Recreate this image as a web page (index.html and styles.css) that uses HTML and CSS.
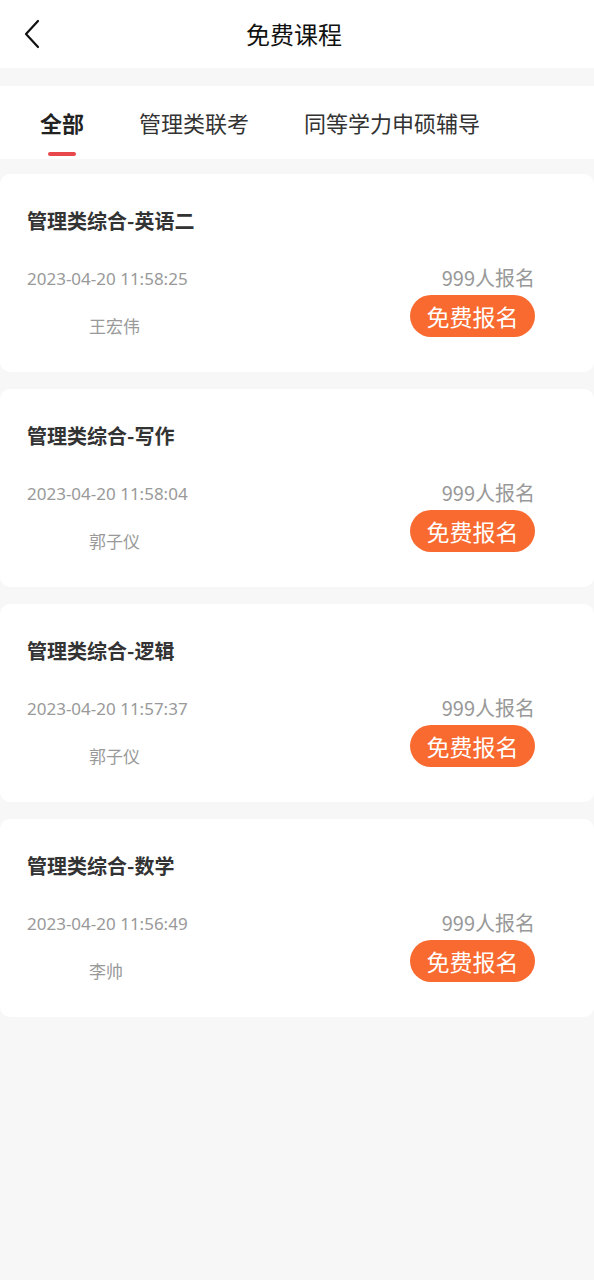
FILE: index.html
```html
<!DOCTYPE html>
<html lang="zh">
<head>
<meta charset="utf-8">
<link rel="stylesheet" href="styles.css">
</head>
<body>
<header class="topbar">
  <svg class="back" width="18" height="30" viewBox="0 0 18 30"><path d="M15 2 L3 15 L15 28" fill="none" stroke="#111" stroke-width="2.2" stroke-linecap="round" stroke-linejoin="round"/></svg>
  <div class="title">免费课程</div>
</header>
<nav class="tabs">
  <div class="tab active">全部<span class="bar"></span></div>
  <div class="tab">管理类联考</div>
  <div class="tab">同等学力申硕辅导</div>
</nav>
<main class="list">
  <div class="card">
    <div class="name">管理类综合-英语二</div>
    <div class="row">
      <div class="meta">
        <div class="date">2023-04-20 11:58:25</div>
        <div class="teacher">王宏伟</div>
      </div>
      <div class="side">
        <div class="count">999人报名</div>
        <div class="btn">免费报名</div>
      </div>
    </div>
  </div>
  <div class="card">
    <div class="name">管理类综合-写作</div>
    <div class="row">
      <div class="meta">
        <div class="date">2023-04-20 11:58:04</div>
        <div class="teacher">郭子仪</div>
      </div>
      <div class="side">
        <div class="count">999人报名</div>
        <div class="btn">免费报名</div>
      </div>
    </div>
  </div>
  <div class="card">
    <div class="name">管理类综合-逻辑</div>
    <div class="row">
      <div class="meta">
        <div class="date">2023-04-20 11:57:37</div>
        <div class="teacher">郭子仪</div>
      </div>
      <div class="side">
        <div class="count">999人报名</div>
        <div class="btn">免费报名</div>
      </div>
    </div>
  </div>
  <div class="card">
    <div class="name">管理类综合-数学</div>
    <div class="row">
      <div class="meta">
        <div class="date">2023-04-20 11:56:49</div>
        <div class="teacher">李帅</div>
      </div>
      <div class="side">
        <div class="count">999人报名</div>
        <div class="btn">免费报名</div>
      </div>
    </div>
  </div>
</main>
</body>
</html>
```
FILE: styles.css
```css
html, body {
  margin: 0;
  padding: 0;
  background: #f7f7f7;
  font-family: "Noto Sans CJK SC", "Noto Sans", sans-serif;
}
.topbar {
  height: 68px;
  background: #fff;
  display: flex;
  align-items: center;
  justify-content: center;
  position: relative;
}
.back {
  position: absolute;
  left: 23px;
  top: 19px;
}
.title {
  font-size: 24px;
  color: #111;
  line-height: 1;
  margin-right: 6px;
}
.tabs {
  margin-top: 18px;
  height: 73px;
  background: #fff;
  display: flex;
  align-items: center;
  padding-left: 40px;
  gap: 55px;
}
.tab {
  font-size: 22px;
  color: #333;
  line-height: 1;
  position: relative;
  top: -1px;
}
.tab.active {
  font-weight: bold;
  font-size: 22px;
  color: #222;
}
.bar {
  position: absolute;
  left: 8px;
  top: 41px;
  width: 28px;
  height: 4px;
  border-radius: 2px;
  background: #e8484b;
}
.list {
  margin-top: 15px;
  display: flex;
  flex-direction: column;
  gap: 17px;
}
.card {
  height: 198px;
  background: #fff;
  border-radius: 10px;
  box-sizing: border-box;
  padding: 33px 59px 0 27px;
}
.name {
  font-size: 20px;
  font-weight: bold;
  color: #333;
  line-height: 28px;
}
.row {
  margin-top: 32px;
  display: flex;
  justify-content: space-between;
}
.date {
  font-family: "Noto Sans", sans-serif;
  font-size: 17px;
  color: #999;
  line-height: 24px;
}
.teacher {
  margin-top: 23px;
  margin-left: 62px;
  font-size: 17px;
  color: #999;
  line-height: 24px;
}
.side {
  display: flex;
  flex-direction: column;
  align-items: flex-end;
}
.count {
  font-size: 20px;
  color: #999;
  line-height: 26px;
  margin-top: -2px;
}
.btn {
  margin-top: 4px;
  width: 125px;
  height: 42px;
  border-radius: 21px;
  background: #f96a30;
  color: #fff;
  font-size: 23px;
  display: flex;
  align-items: center;
  justify-content: center;
  line-height: 1;
}
```
